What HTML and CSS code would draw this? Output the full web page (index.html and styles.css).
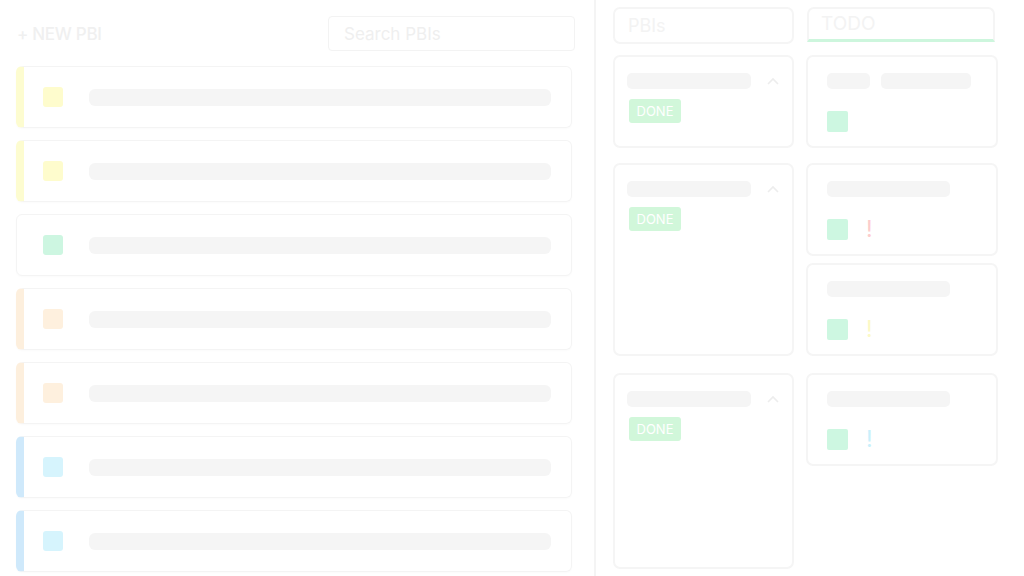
FILE: index.html
```html
<!DOCTYPE html>
<html lang="en">
    <head>
        <meta charset="UTF-8">
        <meta name="viewport" content="width=device-width, initial-scale=1.0">
        <title>Backlog</title>
        <link rel="stylesheet" href="styles.css">
    </head>
    <body>
        <div class="page">
            <section class="backlog">
                <div class="backlog-head">
                    <button class="new-btn">+ NEW PBI</button>
                    <input class="search" type="text" placeholder="Search PBIs">
                </div>
                <div class="pbi-list">
                    <div class="pbi-row pbi-row--yellow"><span class="swatch"></span><span class="bar"></span></div>
                    <div class="pbi-row pbi-row--yellow"><span class="swatch"></span><span class="bar"></span></div>
                    <div class="pbi-row pbi-row--plain"><span class="swatch"></span><span class="bar"></span></div>
                    <div class="pbi-row pbi-row--orange"><span class="swatch"></span><span class="bar"></span></div>
                    <div class="pbi-row pbi-row--orange"><span class="swatch"></span><span class="bar"></span></div>
                    <div class="pbi-row pbi-row--blue"><span class="swatch"></span><span class="bar"></span></div>
                    <div class="pbi-row pbi-row--blue"><span class="swatch"></span><span class="bar"></span></div>
                </div>
            </section>

            <section class="board">
                <div class="board-head">
                    <div class="col-title">PBIs</div>
                    <div class="col-title col-title--todo">TODO</div>
                </div>

                <div class="lane">
                    <div class="story">
                        <div class="story-top">
                            <span class="bar bar--story"></span>
                            <svg class="chevron" width="12" height="8" viewBox="0 0 12 8"><path d="M1 7 L6 2 L11 7" fill="none" stroke="#ededed" stroke-width="1.6"/></svg>
                        </div>
                        <span class="badge">DONE</span>
                    </div>
                    <div class="tasks">
                        <div class="task">
                            <div class="task-bars"><span class="bar bar--short"></span><span class="bar bar--mid"></span></div>
                            <div class="task-foot"><span class="task-swatch"></span></div>
                        </div>
                    </div>
                </div>

                <div class="lane">
                    <div class="story">
                        <div class="story-top">
                            <span class="bar bar--story"></span>
                            <svg class="chevron" width="12" height="8" viewBox="0 0 12 8"><path d="M1 7 L6 2 L11 7" fill="none" stroke="#ededed" stroke-width="1.6"/></svg>
                        </div>
                        <span class="badge">DONE</span>
                    </div>
                    <div class="tasks">
                        <div class="task">
                            <div class="task-bars"><span class="bar bar--long"></span></div>
                            <div class="task-foot"><span class="task-swatch"></span><span class="prio prio--high">!</span></div>
                        </div>
                        <div class="task">
                            <div class="task-bars"><span class="bar bar--long"></span></div>
                            <div class="task-foot"><span class="task-swatch"></span><span class="prio prio--mid">!</span></div>
                        </div>
                    </div>
                </div>

                <div class="lane">
                    <div class="story story--tall">
                        <div class="story-top">
                            <span class="bar bar--story"></span>
                            <svg class="chevron" width="12" height="8" viewBox="0 0 12 8"><path d="M1 7 L6 2 L11 7" fill="none" stroke="#ededed" stroke-width="1.6"/></svg>
                        </div>
                        <span class="badge">DONE</span>
                    </div>
                    <div class="tasks">
                        <div class="task">
                            <div class="task-bars"><span class="bar bar--long"></span></div>
                            <div class="task-foot"><span class="task-swatch"></span><span class="prio prio--low">!</span></div>
                        </div>
                    </div>
                </div>
            </section>
        </div>
    </body>
</html>
```

FILE: styles.css
```css
* {
    margin: 0;
    padding: 0;
    box-sizing: border-box;
    font-family: 'Inter', 'Noto Sans', sans-serif;
}

body {
    background: #fff;
    width: 1024px;
    height: 576px;
    overflow: hidden;
}

.page {
    display: flex;
    height: 576px;
}

/* backlog list */

.backlog {
    width: 596px;
    height: 576px;
    padding: 16px 19px 0 16px;
    border-right: 2px solid #f4f4f4;
}

.backlog-head {
    display: flex;
    justify-content: space-between;
    align-items: center;
    height: 35px;
}

.new-btn {
    background: none;
    border: none;
    color: #f0f0f0;
    font-size: 17px;
    font-weight: 500;
    letter-spacing: -0.3px;
    padding-left: 1px;
}

.search {
    width: 247px;
    height: 35px;
    border: 1px solid #f3f3f3;
    border-radius: 4px;
    padding-left: 15px;
    font-size: 17px;
    color: #efefef;
    outline: none;
}

.search::placeholder {
    color: #efefef;
}

.pbi-list {
    display: flex;
    flex-direction: column;
    gap: 12px;
    margin-top: 15px;
}

.pbi-row {
    display: flex;
    align-items: center;
    height: 62px;
    margin-right: 3px;
    border: 1px solid #f4f4f4;
    border-radius: 6px;
    padding: 0 20px 0 19px;
    box-shadow: 0 1px 2px rgba(0, 0, 0, 0.02);
}

.pbi-row--yellow { border-left: 8px solid #fdfcd0; }
.pbi-row--orange { border-left: 8px solid #fdefdd; }
.pbi-row--blue { border-left: 8px solid #cfe9fb; }
.pbi-row--plain { padding-left: 26px; }

.swatch {
    width: 20px;
    height: 20px;
    border-radius: 3px;
    margin-right: 26px;
    flex-shrink: 0;
}

.pbi-row--yellow .swatch { background: #fefccd; }
.pbi-row--orange .swatch { background: #fef0de; }
.pbi-row--blue .swatch { background: #d6f4fd; }
.pbi-row--plain .swatch { background: #cdf6e1; }

.bar {
    display: block;
    height: 17px;
    border-radius: 6px;
    background: #f5f5f5;
    flex: 1;
}

/* board */

.board {
    padding: 7px 0 0 17px;
}

.board-head {
    display: flex;
    gap: 13px;
}

.col-title {
    width: 181px;
    height: 37px;
    border: 2px solid #f5f5f5;
    border-radius: 7px;
    padding-left: 13px;
    display: flex;
    align-items: center;
    font-size: 18px;
    color: #f3f3f3;
}

.col-title--todo {
    width: 188px;
    height: 35px;
    border-bottom: 3px solid #cdf6dd;
    border-radius: 7px 7px 0 0;
    padding-left: 12px;
    padding-bottom: 2px;
    font-size: 19px;
}

.lane {
    display: flex;
    gap: 12px;
    margin-top: 11px;
}

.lane + .lane {
    margin-top: 15px;
}

.lane:last-child {
    margin-top: 17px;
}

.story {
    width: 181px;
    border: 2px solid #f5f5f5;
    border-radius: 7px;
    padding: 16px 14px 0 12px;
}

.story--tall {
    min-height: 196px;
}

.story-top {
    display: flex;
    align-items: center;
    justify-content: space-between;
}

.bar--story {
    flex: none;
    width: 124px;
    height: 16px;
    border-radius: 5px;
}

.chevron {
    margin-right: -1px;
}

.badge {
    display: inline-block;
    margin: 10px 0 0 2px;
    width: 52px;
    height: 24px;
    line-height: 24px;
    text-align: center;
    background: #d1f7da;
    border-radius: 3px;
    color: #fff;
    font-size: 13px;
    font-weight: 400;
}

.tasks {
    display: flex;
    flex-direction: column;
    gap: 7px;
}

.task {
    width: 192px;
    height: 93px;
    border: 2px solid #f5f5f5;
    border-radius: 7px;
    padding: 16px 0 0 19px;
}

.task-bars {
    display: flex;
    gap: 11px;
}

.task-bars .bar {
    flex: none;
    height: 16px;
    border-radius: 5px;
}

.bar--short { width: 43px; }
.bar--mid { width: 90px; }
.bar--long { width: 123px; }

.task-foot {
    display: flex;
    align-items: center;
    margin-top: 22px;
    height: 21px;
}

.task-swatch {
    width: 21px;
    height: 21px;
    border-radius: 2px;
    background: #cdf7e1;
}

.prio {
    margin-left: 18px;
    font-size: 23px;
    line-height: 21px;
}

.prio--high { color: #fdcccc; }
.prio--mid { color: #fcf9c6; }
.prio--low { color: #c9f0fb; }
```
